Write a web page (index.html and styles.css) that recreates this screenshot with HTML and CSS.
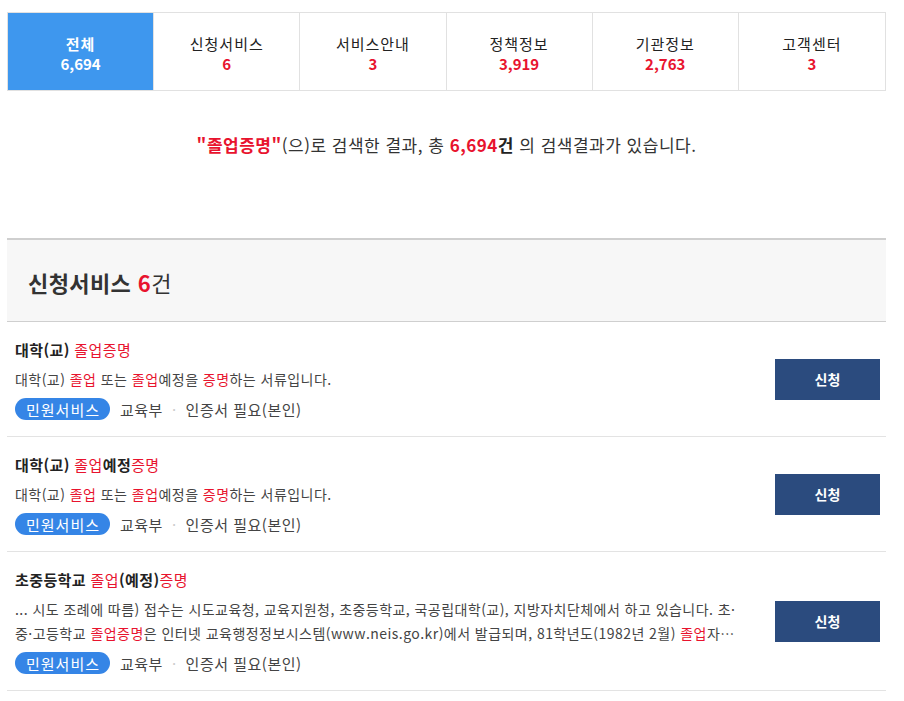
FILE: index.html
```html
<!DOCTYPE html>
<html lang="ko">
<head>
<meta charset="utf-8">
<title>통합검색 결과</title>
<link rel="stylesheet" href="styles.css">
</head>
<body>
<div class="page">
  <nav class="tabs">
    <a class="tab active"><span class="tab-label">전체</span><span class="tab-count">6,694</span></a>
    <a class="tab"><span class="tab-label">신청서비스</span><span class="tab-count">6</span></a>
    <a class="tab"><span class="tab-label">서비스안내</span><span class="tab-count">3</span></a>
    <a class="tab"><span class="tab-label">정책정보</span><span class="tab-count">3,919</span></a>
    <a class="tab"><span class="tab-label">기관정보</span><span class="tab-count">2,763</span></a>
    <a class="tab"><span class="tab-label">고객센터</span><span class="tab-count">3</span></a>
  </nav>

  <p class="summary"><strong class="hl">"졸업증명"</strong>(으)로 검색한 결과, 총 <strong class="hl">6,694</strong><strong>건</strong> 의 검색결과가 있습니다.</p>

  <section class="group">
    <h2 class="group-title">신청서비스 <span class="hl">6</span><span class="unit">건</span></h2>
    <ul class="results">
      <li class="result">
        <div class="result-body">
          <h3 class="result-title">대학(교) <em class="mark">졸업증명</em></h3>
          <p class="result-desc">대학(교) <em class="mark">졸업</em> 또는 <em class="mark">졸업</em>예정을 <em class="mark">증명</em>하는 서류입니다.</p>
          <div class="meta"><span class="badge">민원서비스</span><span class="meta-item">교육부</span><span class="sep">·</span><span class="meta-item">인증서 필요(본인)</span></div>
        </div>
        <a class="apply">신청</a>
      </li>
      <li class="result">
        <div class="result-body">
          <h3 class="result-title">대학(교) <em class="mark">졸업</em>예정<em class="mark">증명</em></h3>
          <p class="result-desc">대학(교) <em class="mark">졸업</em> 또는 <em class="mark">졸업</em>예정을 <em class="mark">증명</em>하는 서류입니다.</p>
          <div class="meta"><span class="badge">민원서비스</span><span class="meta-item">교육부</span><span class="sep">·</span><span class="meta-item">인증서 필요(본인)</span></div>
        </div>
        <a class="apply">신청</a>
      </li>
      <li class="result">
        <div class="result-body">
          <h3 class="result-title">초중등학교 <em class="mark">졸업</em>(예정)<em class="mark">증명</em></h3>
          <p class="result-desc clamp">... 시도 조례에 따름) 접수는 시도교육청, 교육지원청, 초중등학교, 국공립대학(교), 지방자치단체에서 하고 있습니다. 초·중·고등학교 <em class="mark">졸업증명</em>은 인터넷 교육행정정보시스템(www.neis.go.kr)에서 발급되며, 81학년도(1982년 2월) <em class="mark">졸업</em>자부터 발급이 가능합니다.</p>
          <div class="meta"><span class="badge">민원서비스</span><span class="meta-item">교육부</span><span class="sep">·</span><span class="meta-item">인증서 필요(본인)</span></div>
        </div>
        <a class="apply">신청</a>
      </li>
    </ul>
  </section>
</div>
</body>
</html>
```

FILE: styles.css
```css
* { box-sizing: border-box; }
html, body { margin: 0; padding: 0; background: #fff; }
body {
  font-family: "Noto Sans CJK KR", "Noto Sans", sans-serif;
  color: #333;
}
.page {
  width: 879px;
  margin-left: 7px;
  padding-top: 12px;
}
.tabs {
  display: grid;
  grid-template-columns: repeat(6, 1fr);
  border: 1px solid #e1e1e1;
  height: 79px;
}
.tab {
  display: flex;
  flex-direction: column;
  align-items: center;
  justify-content: center;
  border-right: 1px solid #e1e1e1;
  color: #222;
  text-decoration: none;
  line-height: 20px;
  padding-top: 5px;
}
.tab:last-child { border-right: 0; }
.tab.active { background: #3e97ee; color: #fff; }
.tab-label { font-size: 15px; letter-spacing: 1px; }
.tab-count { font-size: 15px; font-weight: 700; color: #e8132e; letter-spacing: 0; }
.tab.active .tab-label { font-weight: 700; }
.tab.active .tab-count { color: #fff; }

.summary {
  margin: 42px 0 0;
  text-align: center;
  font-size: 17px;
  line-height: 24px;
  color: #333;
  letter-spacing: 0.5px;
}
.summary strong { font-weight: 700; color: #222; }
.summary .hl, .hl { color: #e8132e; }

.group { margin-top: 81px; }
.group-title {
  margin: 0;
  height: 84px;
  display: flex;
  align-items: center;
  padding-left: 21px;
  padding-top: 2px;
  background: #f7f7f7;
  border-top: 2px solid #cfcfcf;
  border-bottom: 1px solid #cfcfcf;
  font-size: 22px;
  font-weight: 700;
  color: #333;
  letter-spacing: 0.4px;
  white-space: pre;
}
.group-title .unit { font-weight: 400; }

.results { list-style: none; margin: 0; padding: 0; }
.result {
  display: flex;
  align-items: center;
  padding: 16px 6px 16px 8px;
  border-bottom: 1px solid #e3e3e3;
}
.result-body { flex: 1; min-width: 0; margin-right: 30px; }
.result-title {
  margin: 0;
  font-size: 15px;
  line-height: 24px;
  font-weight: 700;
  color: #222;
  letter-spacing: 0.4px;
}
.mark { font-style: normal; color: #e8132e; }
.result-title .mark { font-weight: 400; }
.result-desc {
  margin: 5px 0 0;
  font-size: 14px;
  line-height: 24px;
  color: #444;
  letter-spacing: 0.45px;
}
.clamp {
  display: -webkit-box;
  -webkit-line-clamp: 2;
  -webkit-box-orient: vertical;
  overflow: hidden;
}
.meta {
  display: flex;
  align-items: center;
  margin-top: 7px;
  height: 22px;
  font-size: 15px;
  color: #444;
  letter-spacing: 0.5px;
}
.badge {
  display: inline-flex;
  align-items: center;
  height: 22px;
  padding: 0 10px 0 11px;
  border-radius: 11px;
  background: #3585e6;
  color: #fff;
  font-size: 15px;
  letter-spacing: 1px;
  margin-right: 10px;
}
.sep { color: #ccc; margin: 0 9px; }
.apply {
  flex: none;
  width: 105px;
  height: 41px;
  display: flex;
  align-items: center;
  justify-content: center;
  background: #2b4b7e;
  color: #fff;
  font-size: 14px;
  font-weight: 700;
  text-decoration: none;
}
```
